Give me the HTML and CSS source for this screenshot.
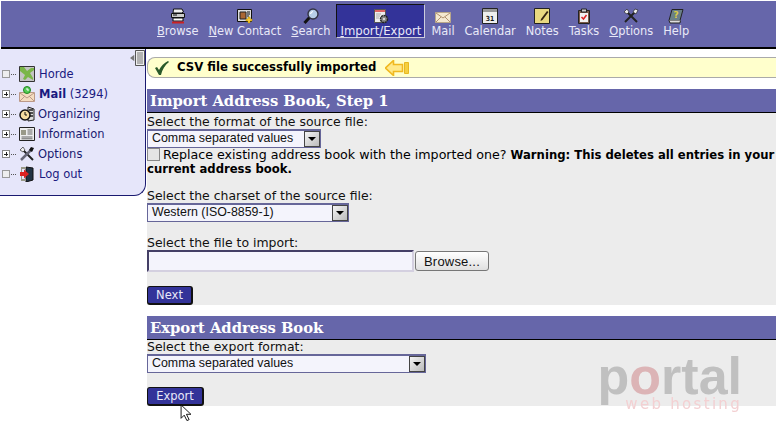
FILE: index.html
```html
<!DOCTYPE html>
<html lang="en">
<head>
<meta charset="utf-8">
<title>Import Address Book</title>
<link rel="stylesheet" href="styles.css">
</head>
<body>
<nav class="topbar">
  <a class="tool"><svg class="ticon" viewBox="0 0 16 16"><path d="M3.500 1h8.500l1.500 3-2 1H3z" fill="#f2f2f2" stroke="#111"/><path d="M1.500 5.500h13v4h-13z" fill="#ccc" stroke="#111"/><path d="M3 7h4" stroke="#111"/><path d="M3 10h10v3H3z" fill="#fff" stroke="#111"/><path d="M2 13.500h12v2H2z" fill="#c22"/></svg><span><u>B</u>rowse</span></a>
  <a class="tool"><svg class="ticon" viewBox="0 0 16 16"><path d="M.5 1.500h14v12H.5z" fill="#ddd" stroke="#111"/><path d="M3 4h6v7H3z" fill="#a63" stroke="#222"/><path d="M10 4h3M10 6h3M10 8h2" stroke="#111"/><path d="M11 9h2v2h2v2h-2v2h-2v-2H9v-2h2z" fill="#fc3" stroke="#a80" stroke-width=".5"/></svg><span><u>N</u>ew Contact</span></a>
  <a class="tool"><svg class="ticon" viewBox="0 0 16 16"><path d="M6.500 9.500L1.500 15" stroke="#111" stroke-width="3"/><circle cx="10" cy="6" r="5" fill="#b8cfe8" stroke="#334" stroke-width="1.400"/><path d="M7.500 6a3 3 0 0 1 2.500-2.500" fill="none" stroke="#fff" stroke-width="1.200"/></svg><span><u>S</u>earch</span></a>
  <a class="tool active"><svg class="ticon" viewBox="0 0 16 16"><path d="M1.500 1.500h11v13h-11z" fill="#eee" stroke="#555"/><path d="M2 2h10v2H2z" fill="#d66"/><path d="M3 6h5M3 8h4M3 10h3" stroke="#aaa"/><circle cx="11" cy="11" r="3.500" fill="#888" stroke="#222" stroke-width="1.500" stroke-dasharray="2 .6"/><circle cx="11" cy="11" r="1" fill="#eee"/></svg><span><u>I</u>mport/Export</span></a>
  <a class="tool"><svg class="ticon" viewBox="0 0 16 16"><path d="M.5 4.500h15v10H.5z" fill="#f4e8d0" stroke="#b9a78a"/><path d="M1 5l7 5 7-5M1 14l5-5M15 14l-5-5" fill="none" stroke="#b09070"/></svg><span>Mail</span></a>
  <a class="tool"><svg class="ticon" viewBox="0 0 16 16"><path d="M.5.500h15v15H.5z" fill="#eee" stroke="#222"/><path d="M1 1h14v3H1z" fill="#999"/><text class="caltext" x="8" y="13" text-anchor="middle">31</text></svg><span>Calendar</span></a>
  <a class="tool"><svg class="ticon" viewBox="0 0 16 16"><path d="M.5.500h15v15H.5z" fill="#e8d880" stroke="#222"/><path d="M7 11l6-8 1.500 1-6 8-2 1z" fill="#321"/></svg><span>Notes</span></a>
  <a class="tool"><svg class="ticon" viewBox="0 0 16 16"><path d="M2.500 2.500h11v13h-11z" fill="#7a5a48" stroke="#222"/><path d="M4 5h8v9H4z" fill="#f2f2f2"/><path d="M5.500 1h5v3h-5z" fill="#ccc" stroke="#222"/><path d="M5.500 9l2 2 3-4" fill="none" stroke="#d22" stroke-width="1.500"/></svg><span>Tasks</span></a>
  <a class="tool"><svg class="ticon" viewBox="0 0 16 16"><path d="M3 3l11 11" stroke="#222" stroke-width="2"/><path d="M13 3L2 14" stroke="#222" stroke-width="2"/><path d="M1 4l3-3 2 3-2 2z" fill="#eee" stroke="#111" stroke-width=".6"/><path d="M12 1l3 1-2 4-3-2z" fill="#eee" stroke="#111" stroke-width=".6"/></svg><span><u>O</u>ptions</span></a>
  <a class="tool"><svg class="ticon" viewBox="0 0 16 16"><path d="M4 1.500h11l-3 11H1z" fill="#6a8088" stroke="#222"/><path d="M1 12.500l1 2.500h10l.5-2.500" fill="#ddd" stroke="#222"/><text class="helptext" x="8" y="10" text-anchor="middle">?</text></svg><span>Help</span></a>
</nav>
<div class="page">
  <aside class="sidebar">
    <svg class="collapse" viewBox="0 0 15 16"><path d="M0 8l4-3v6z" fill="#777"/><path d="M4.500 5h3v6h-3z" fill="#bbb"/><path d="M5.500.500h9v15h-9z" fill="#eee" stroke="#555"/><path d="M7 3h6M7 5h6M7 7h6M7 9h6M7 11h6M7 13h6" stroke="#777"/></svg>
    <ul class="tree">
      <li class="row"><i class="box"></i><i class="dots"></i>
        <svg class="ricon" viewBox="0 0 16 16"><path d="M.5.500h15v15H.5z" fill="#c4c4c4" stroke="#333"/><path d="M1 1h4l3 4 4-3h3v2l-4 3 3 5v2l-5-3-3 3-2-1 2-4-5-4z" fill="#7ab648"/></svg>
        <a class="rlink">Horde</a></li>
      <li class="row"><i class="box plus"></i><i class="dots"></i>
        <svg class="ricon" viewBox="0 0 16 16"><path d="M.5 6.500h15v9H.5z" fill="#f4dcc0" stroke="#b98"/><path d="M1 7l7 5 7-5M1 15l5-5M15 15l-5-5" fill="none" stroke="#b98"/><circle cx="8" cy="4" r="3.500" fill="#5c5" stroke="#282"/><path d="M8 2v2h2" fill="none" stroke="#fff"/></svg>
        <a class="rlink"><b>Mail</b> (3294)</a></li>
      <li class="row"><i class="box plus"></i><i class="dots"></i>
        <svg class="ricon" viewBox="0 0 16 16"><path d="M9 1l6 2v11l-6 1z" fill="#ddd" stroke="#222"/><path d="M10 4h4M10 7h4M10 10h4" stroke="#222" stroke-width="1.500"/><circle cx="6" cy="9" r="5" fill="#f4dca0" stroke="#111" stroke-width="1.500"/><path d="M6 6v3h2" fill="none" stroke="#111"/></svg>
        <a class="rlink tight">Organizing</a></li>
      <li class="row"><i class="box plus"></i><i class="dots"></i>
        <svg class="ricon" viewBox="0 0 16 16"><path d="M.5 1.500h15v13H.5z" fill="#eee" stroke="#222"/><path d="M2 4h5v5H2z" fill="#998"/><path d="M8.500 4h5M8.500 6h5M8.500 8h5M2.500 11h11M2.500 12.800h11" stroke="#666"/></svg>
        <a class="rlink tight">Information</a></li>
      <li class="row"><i class="box plus"></i><i class="dots"></i>
        <svg class="ricon" viewBox="0 0 16 16"><path d="M3 3l11 11" stroke="#222" stroke-width="2"/><path d="M13 3L2 14" stroke="#667" stroke-width="2.500"/><path d="M1 4l3-3 2 3-2 2z" fill="#eee" stroke="#111" stroke-width=".6"/><path d="M12 1l3 1-2 4-3-2z" fill="#111"/></svg>
        <a class="rlink tight">Options</a></li>
      <li class="row"><i class="box"></i><i class="dots"></i>
        <svg class="ricon" viewBox="0 0 16 16"><path d="M7 1l7 1v12l-7 2z" fill="#234" stroke="#111"/><path d="M2 1h5v2H3v10h4v2H2z" fill="#998"/><path d="M1 6h4V3.500l5 4.500-5 4.500V10H1z" fill="#d22"/></svg>
        <a class="rlink">Log out</a></li>
    </ul>
  </aside>
  <main class="main">
    <div class="notice">
      <svg class="check" viewBox="0 0 14 14"><path d="M0 7l2-1 2 3c2-4 5-7 9-9l1 1c-4 3-7 8-8 13H4z" fill="#2a5a2a"/></svg>
      <strong class="notice-text">CSV file successfully imported</strong>
      <svg class="arrow" viewBox="0 0 25 16"><path d="M.5 8l8-7.500v4h9v7h-9v4z" fill="#ffe98a" stroke="#f0b820" stroke-width="1.600"/><path d="M19.500 2.500h4v11h-4z" fill="#f5cf40" stroke="#e8b820"/></svg>
    </div>
    <section class="panel first">
      <h2 class="head">Import Address Book, Step 1</h2>
      <div class="body import">
        <label class="lbl">Select the format of the source file:</label>
        <div class="sel fmt"><span class="val">Comma separated values</span><i class="drop"></i></div>
        <p class="replace"><i class="chk"></i>Replace existing address book with the imported one? <b class="warn">Warning: This deletes all entries in your</b><br><b class="warn">current address book.</b></p>
        <label class="lbl gap1">Select the charset of the source file:</label>
        <div class="sel cs"><span class="val">Western (ISO-8859-1)</span><i class="drop"></i></div>
        <label class="lbl gap2">Select the file to import:</label>
        <div class="filerow"><i class="file"></i><span class="browse">Browse...</span></div>
        <span class="btn next">Next</span>
      </div>
    </section>
    <section class="panel">
      <h2 class="head">Export Address Book</h2>
      <div class="body export">
        <label class="lbl">Select the export format:</label>
        <div class="sel ex"><span class="val">Comma separated values</span><i class="drop"></i></div>
        <span class="btn exp">Export</span>
      </div>
    </section>
    <div class="mark"><span class="mark-big">p<span class="mark-o">o</span>rtal</span><span class="mark-small">web hosting</span></div>
    <svg class="cursor" viewBox="0 0 13 19"><path d="M1 1v15l3.500-3.500 3 6 2.500-1-3-6h5z" fill="#fff" stroke="#000"/></svg>
  </main>
</div>
</body>
</html>
```

FILE: styles.css
```css
* { box-sizing: border-box; }
html, body { margin: 0; height: 100%; overflow: hidden; background: #fff; }
body { padding: 1px 0 0 1px; font: 12.45px/15px "DejaVu Sans", Verdana, sans-serif; color: #000; }
.topbar { display: flex; height: 48px; padding: 3px 0 0 152px; background: #6666aa; border-bottom: 2px solid #000; gap: 2px; }
.tool { display: flex; flex-direction: column; align-items: center; height: 34px; padding: 3px 3px 0; color: #e9e9f8; font-size: 11.4px; line-height: 15px; border: 1px solid transparent; }
.tool.active { background: #333399; border-color: #111 #ccd #ccd #111; font-size: 11.7px; }
.ticon { width: 16px; height: 16px; flex: none; }
.caltext { font: bold 7px "DejaVu Sans Mono", monospace; fill: #111; }
.helptext { font: bold 9px "DejaVu Sans", sans-serif; fill: #dc4; }
.page { display: flex; align-items: flex-start; }
.sidebar { position: relative; width: 146px; height: 147px; margin-left: -1px; padding-top: 15px; background: #e6e6fa; border-right: 1px solid #1a1a70; border-bottom: 1px solid #1a1a70; border-bottom-right-radius: 12px; }
.collapse { position: absolute; right: 0; top: 1px; width: 15px; height: 16px; }
.tree { list-style: none; margin: 0; padding: 0; }
.row { display: flex; align-items: center; height: 20px; padding-left: 2px; }
.box { width: 8px; height: 8px; border: 1px solid #999; background: #eee; flex: none; }
.box.plus { background: linear-gradient(#222,#222) center/4px 1px no-repeat, linear-gradient(#222,#222) center/1px 4px no-repeat, #fff; border-color: #888; }
.dots { width: 5px; margin: 0 3px 0 1px; border-top: 1px dotted #555; flex: none; }
.ricon { width: 16px; height: 16px; flex: none; margin-right: 4px; }
.rlink { color: #1a1a80; font-size: 11.5px; }
.rlink.tight { margin-left: -1px; color: #1a1a70; }
.main { position: relative; flex: 1; min-width: 0; padding: 8px 0 0 1px; }
.notice { display: flex; align-items: center; height: 21px; background: #ffffcc; border: 1px solid #aaa; border-width: 1px 0 1px 1px; border-radius: 8px 0 0 8px; padding-left: 7px; margin-bottom: 11px; }
.check { width: 14px; height: 14px; flex: none; margin-right: 8px; }
.notice-text { font-size: 11.7px; }
.arrow { width: 25px; height: 16px; flex: none; margin-left: 9px; }
.panel { background: #ececec; margin-bottom: 11px; }
.head { margin: 0; height: 24px; padding: 2px 3px 0; background: #6666aa; border-bottom: 1px solid #000; color: #fff; font: bold 14.75px/20px "DejaVu Serif", Georgia, serif; }
.body { display: flex; flex-direction: column; align-items: flex-start; }
.import { height: 192px; padding-top: 1px; }
.export { height: 66px; }
.export .lbl { line-height: 14px; }
.lbl { display: block; flex: none; line-height: 15px; color: #111; }
.sel { display: flex; align-items: center; flex: none; height: 19px; padding-bottom: 2px; background: #f4f4fc; border: 1px solid #666699; border-width: 2px 1px 1px 1px; font: 12.4px "Liberation Sans", Arial, sans-serif; color: #111; }
.val { flex: 1; padding-left: 4px; }
.drop { width: 16px; height: 16px; margin-bottom: -2px; background: linear-gradient(135deg, #f4f4f4, #bbb); border: 1px solid #444; position: relative; flex: none; }
.drop::after { content: ""; position: absolute; left: 3px; top: 5px; border: 4px solid transparent; border-top-color: #000; border-bottom: 0; }
.fmt { width: 174px; }
.cs { width: 202px; }
.ex { width: 279px; }
.replace { flex: none; width: 100%; height: 28px; margin: 0; font-size: 12.65px; line-height: 14px; white-space: nowrap; }
.chk { display: inline-block; width: 13px; height: 13px; margin-right: 3px; vertical-align: -2px; background: #e4e4e4; border: 1px solid #888; }
.warn { font-size: 11.65px; }
.gap1 { margin-top: 12px; }
.gap2 { margin-top: 13px; }
.filerow { display: flex; align-items: center; flex: none; gap: 1px; }
.file { display: block; width: 267px; height: 22px; background: #f4f4fc; border: 2px solid #443f66; border-right-color: #d4d0e0; border-bottom-color: #d4d0e0; }
.browse { display: flex; align-items: center; justify-content: center; width: 74px; height: 20px; font: 13px "Liberation Sans", Arial, sans-serif; letter-spacing: .2px; color: #111; background: linear-gradient(#fff, #e0e0e0); border: 1px solid #777; border-radius: 3px; }
.btn { display: flex; align-items: center; justify-content: center; flex: none; height: 19px; font-size: 11.5px; color: #e8e8f8; background: #333399; border: 1px solid #111; border-width: 1px 2px 2px 1px; border-radius: 3px; }
.next { width: 46px; margin-top: 14px; }
.exp { width: 57px; margin-top: 14px; }
.mark { position: absolute; left: 451px; top: 307px; display: flex; flex-direction: column; align-items: flex-end; width: 145px; filter: blur(.4px); pointer-events: none; }
.mark-big { font: bold 52px/40px "Liberation Sans", Arial, sans-serif; color: #c0c0c0; }
.mark-o { color: #dcb4b6; }
.mark-small { margin-top: 1px; font: 15px/14px "DejaVu Sans", sans-serif; color: #f3d0d2; letter-spacing: 2.3px; }
.cursor { position: absolute; left: 34px; top: 355px; width: 12px; height: 17px; }
```
